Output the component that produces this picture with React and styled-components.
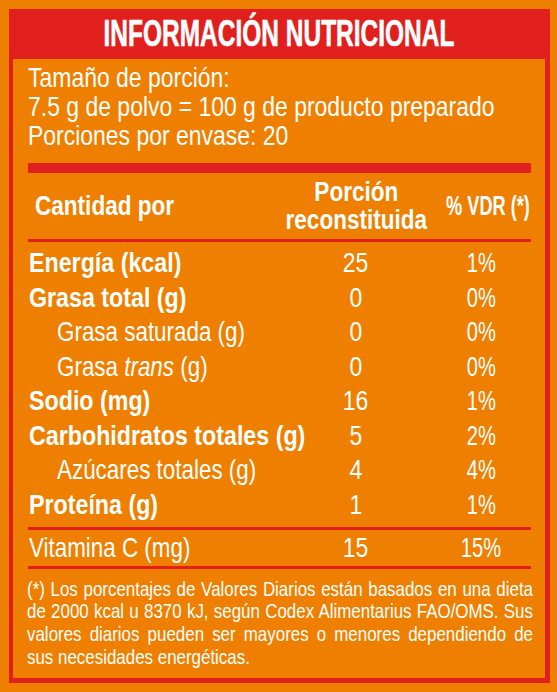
import React from 'react';
import styled, { createGlobalStyle } from 'styled-components';

const ORANGE = '#ee7f00';
const RED = '#e1201d';

const GlobalStyle = createGlobalStyle`
    html, body {
        margin: 0;
        padding: 0;
        background: ${ORANGE};
    }
    * {
        box-sizing: border-box;
    }
`;

const Page = styled.div`
    width: 557px;
    height: 692px;
    padding: 9px 7px 9px 9px;
    background: ${ORANGE};
    font-family: 'Liberation Sans', Arial, sans-serif;
    color: #fff;
    overflow: hidden;
`;

const Frame = styled.div`
    height: 100%;
    background: ${RED};
    padding: 0 5px 5px 4px;
    display: flex;
    flex-direction: column;
`;

// the label uses a narrow typeface; squeeze Liberation Sans to match
const Squeeze = styled.span`
    display: inline-block;
    white-space: nowrap;
    transform: scaleX(${(p) => p.$s || 0.82});
    transform-origin: ${(p) => p.$origin || 'left'} center;
`;

const TitleBar = styled.div`
    height: 50px;
    display: flex;
    align-items: center;
    justify-content: center;
`;

const Title = styled.h1`
    margin: 0;
    display: inline-block;
    font-size: 36px;
    font-weight: 700;
    line-height: 1;
    white-space: nowrap;
    -webkit-text-stroke: 0.6px #fff;
    transform: scaleX(0.68);
`;

const Panel = styled.div`
    flex: 1;
    background: ${ORANGE};
    display: flex;
    flex-direction: column;
`;

const Serving = styled.div`
    padding: 4px 0 0 15px;
    font-size: 28px;
    line-height: 29px;
`;

const ServingLine = styled.div`
    height: 29px;
`;

const Table = styled.div`
    margin: 13px 14px 0 15px;
`;

const Rule = styled.div`
    height: ${(p) => (p.$thick ? '10px' : '3px')};
    background: ${RED};
`;

const Row = styled.div`
    display: grid;
    grid-template-columns: minmax(0, 1fr) 150px 100px;
    align-items: center;
    height: ${(p) => p.$height || '34.5px'};
    font-size: 28px;
    line-height: 28px;
`;

const HeadRow = styled(Row)`
    height: 66px;
    font-weight: 700;
    font-size: 27.5px;
    line-height: 28.5px;
`;

const Rows = styled.div`
    padding: 4px 0 5px;
`;

const Name = styled.div`
    min-width: 0;
    padding-left: ${(p) => (p.$sub ? '29px' : '1px')};
    font-weight: ${(p) => (p.$bold ? 700 : 400)};
    white-space: nowrap;
`;

const Cell = styled.div`
    min-width: 0;
    display: flex;
    justify-content: ${(p) => (p.$align === 'right' ? 'flex-end' : 'center')};
    text-align: center;
    padding-right: ${(p) => (p.$align === 'right' ? '1px' : '0')};
    white-space: nowrap;
`;

const HeadLabel = styled.div`
    padding-left: 7px;
`;

const Footnote = styled.p`
    margin: 0 0 0 13.5px;
    width: 622px;
    padding: 8.5px 0 0;
    font-size: 20.8px;
    line-height: 22.8px;
    text-align: justify;
    transform: scaleX(0.8135);
    transform-origin: left top;
`;

const nutrients = [
    { name: 'Energía (kcal)', value: '25', pct: '1%', bold: true },
    { name: 'Grasa total (g)', value: '0', pct: '0%', bold: true },
    { name: 'Grasa saturada (g)', value: '0', pct: '0%', sub: true },
    { name: <>Grasa <i>trans</i> (g)</>, value: '0', pct: '0%', sub: true },
    { name: 'Sodio (mg)', value: '16', pct: '1%', bold: true },
    { name: 'Carbohidratos totales (g)', value: '5', pct: '2%', bold: true },
    { name: 'Azúcares totales (g)', value: '4', pct: '4%', sub: true },
    { name: 'Proteína (g)', value: '1', pct: '1%', bold: true },
];

export default function App() {
    return (
        <>
            <GlobalStyle />
            <Page>
                <Frame>
                    <TitleBar>
                        <Title>INFORMACIÓN NUTRICIONAL</Title>
                    </TitleBar>
                    <Panel>
                        <Serving>
                            <ServingLine>
                                <Squeeze>Tamaño de porción:</Squeeze>
                            </ServingLine>
                            <ServingLine>
                                <Squeeze>7.5 g de polvo = 100 g de producto preparado</Squeeze>
                            </ServingLine>
                            <ServingLine>
                                <Squeeze>Porciones por envase: 20</Squeeze>
                            </ServingLine>
                        </Serving>
                        <Table>
                            <Rule $thick />
                            <HeadRow>
                                <HeadLabel>
                                    <Squeeze>Cantidad por</Squeeze>
                                </HeadLabel>
                                <Cell>
                                    <Squeeze $origin="center">
                                        Porción
                                        <br />
                                        reconstituida
                                    </Squeeze>
                                </Cell>
                                <Cell $align="right">
                                    <Squeeze $origin="right" $s={0.66}>
                                        % VDR (*)
                                    </Squeeze>
                                </Cell>
                            </HeadRow>
                            <Rule />
                            <Rows>
                                {nutrients.map((n, i) => (
                                    <Row key={i}>
                                        <Name $sub={n.sub} $bold={n.bold}>
                                            <Squeeze $s={n.bold ? 0.83 : 0.8}>{n.name}</Squeeze>
                                        </Name>
                                        <Cell>
                                            <Squeeze $origin="center">{n.value}</Squeeze>
                                        </Cell>
                                        <Cell>
                                            <Squeeze $origin="center" $s={0.72}>
                                                {n.pct}
                                            </Squeeze>
                                        </Cell>
                                    </Row>
                                ))}
                            </Rows>
                            <Rule />
                            <Row $height="36px">
                                <Name>
                                    <Squeeze $s={0.8}>Vitamina C (mg)</Squeeze>
                                </Name>
                                <Cell>
                                    <Squeeze $origin="center">15</Squeeze>
                                </Cell>
                                <Cell>
                                    <Squeeze $origin="center" $s={0.72}>
                                        15%
                                    </Squeeze>
                                </Cell>
                            </Row>
                            <Rule />
                        </Table>
                        <Footnote>
                            (*) Los porcentajes de Valores Diarios están basados en una dieta de 2000 kcal u 8370 kJ,
                            según Codex Alimentarius FAO/OMS. Sus valores diarios pueden ser mayores o menores
                            dependiendo de sus necesidades energéticas.
                        </Footnote>
                    </Panel>
                </Frame>
            </Page>
        </>
    );
}
